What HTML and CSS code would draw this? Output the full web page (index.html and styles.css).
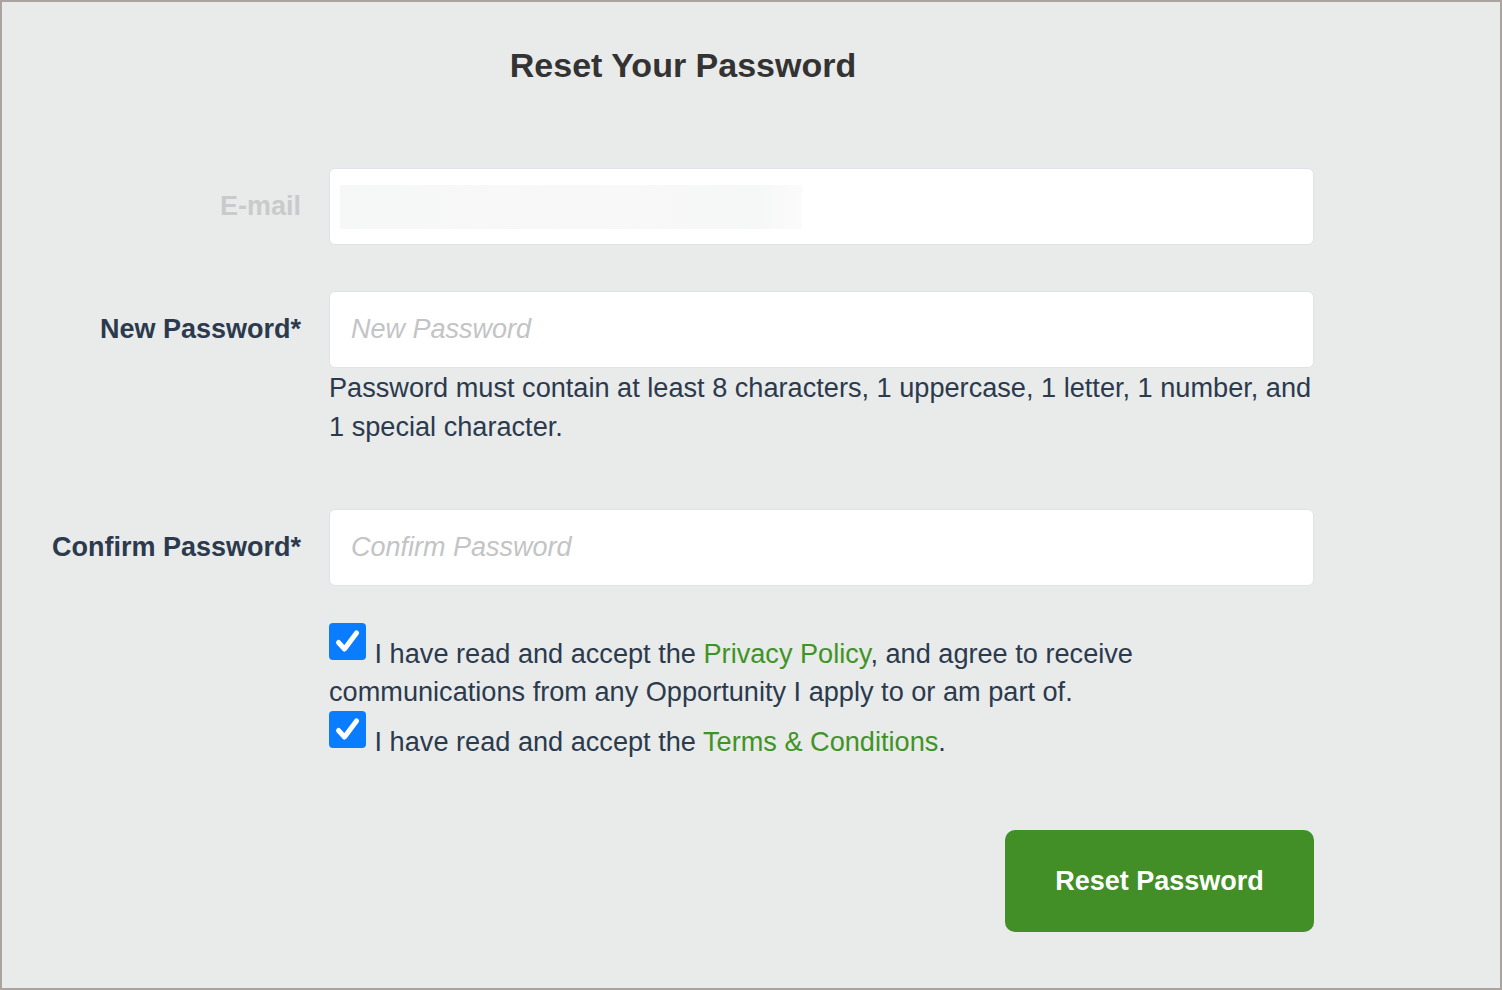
FILE: index.html
```html
<!DOCTYPE html>
<html lang="en">
<head>
    <meta charset="UTF-8">
    <meta name="viewport" content="width=device-width, initial-scale=1.0">
    <title>Reset Your Password</title>
    <link rel="stylesheet" href="styles.css">
</head>
<body>

<div class="page-frame">
    <div class="reset-form">
        <h1 class="reset-title">Reset Your Password</h1>

        <div class="form-row">
            <label class="form-label disabled">E-mail</label>
            <div class="form-field">
                <div class="form-input">
                    <span class="email-redacted"></span>
                </div>
            </div>
        </div>

        <div class="form-row">
            <label class="form-label">New Password*</label>
            <div class="form-field">
                <div class="form-input">
                    <span class="placeholder">New Password</span>
                </div>
                <p class="help-text">Password must contain at least 8 characters, 1 uppercase, 1 letter, 1 number, and 1 special character.</p>
            </div>
        </div>

        <div class="form-row confirm-row">
            <label class="form-label">Confirm Password*</label>
            <div class="form-field">
                <div class="form-input">
                    <span class="placeholder">Confirm Password</span>
                </div>
            </div>
        </div>

        <div class="agreements">
            <p class="agree-line">
                <span class="check-box"><svg viewBox="0 0 37 37" width="37" height="37"><path d="M9.5 19.5 L15.5 26 L27.5 10" fill="none" stroke="#fff" stroke-width="5" stroke-linecap="round" stroke-linejoin="round"/></svg></span>
                I have read and accept the <a href="#">Privacy Policy</a>, and agree to receive communications from any Opportunity I apply to or am part of.
            </p>
            <p class="agree-line">
                <span class="check-box"><svg viewBox="0 0 37 37" width="37" height="37"><path d="M9.5 19.5 L15.5 26 L27.5 10" fill="none" stroke="#fff" stroke-width="5" stroke-linecap="round" stroke-linejoin="round"/></svg></span>
                I have read and accept the <a href="#">Terms &amp; Conditions</a>.
            </p>
        </div>

        <div class="form-actions">
            <button class="submit-btn">Reset Password</button>
        </div>
    </div>
</div>

</body>
</html>
```

FILE: styles.css
```css
html, body {
    margin: 0;
    padding: 0;
}
body {
    font-family: "Liberation Sans", Arial, Helvetica, sans-serif;
    color: #2b3a4d;
}
.page-frame {
    box-sizing: border-box;
    width: 1502px;
    height: 990px;
    border: 2px solid #aaa3a0;
    background: #e9eaea;
}
.reset-form {
    width: 1262px;
    margin-left: 50px;
}
.reset-title {
    margin: 0;
    padding-top: 43px;
    font-size: 34px;
    line-height: 40px;
    font-weight: bold;
    color: #333;
    text-align: center;
}
.form-row {
    display: grid;
    grid-template-columns: 249px 985px;
    column-gap: 28px;
    margin-top: 83px;
}
.form-row + .form-row {
    margin-top: 46px;
}
.form-row.confirm-row {
    margin-top: 63px;
}
.form-label {
    height: 77px;
    display: flex;
    align-items: center;
    justify-content: flex-end;
    white-space: nowrap;
    font-size: 27px;
    font-weight: bold;
    color: #2b3a4d;
}
.form-label.disabled {
    color: #c9cacb;
}
.form-input {
    box-sizing: border-box;
    height: 77px;
    background: #fff;
    border: 1px solid #dde3ea;
    border-radius: 6px;
    display: flex;
    align-items: center;
    padding: 0 21px;
}
.placeholder {
    font-size: 27px;
    font-style: italic;
    color: #c3c4c5;
}
.email-redacted {
    display: block;
    width: 462px;
    height: 44px;
    margin-left: -11px;
    background: linear-gradient(90deg, #f6f7f7, #f8f8f8 50%, #f6f7f7 90%, #fbfbfb);
}
.help-text {
    margin: 0;
    font-size: 27.15px;
    line-height: 39px;
    color: #2b3a4d;
}
.agreements {
    margin-left: 277px;
    margin-top: 37px;
    width: 985px;
}
.agree-line {
    margin: 0;
    font-size: 27.15px;
    line-height: 38px;
    color: #2b3a4d;
}
.agree-line a {
    color: #3f9426;
    text-decoration: none;
}
.check-box {
    display: inline-block;
    width: 37px;
    height: 37px;
    margin-right: 1px;
    background: #0a7cff;
    border-radius: 4px;
    vertical-align: 3px;
}
.check-box svg {
    display: block;
}
.form-actions {
    display: flex;
    justify-content: flex-end;
    margin-top: 69px;
}
.submit-btn {
    width: 309px;
    height: 102px;
    border: none;
    border-radius: 10px;
    background: #418f26;
    color: #fff;
    font-family: "Liberation Sans", Arial, sans-serif;
    font-size: 27px;
    font-weight: bold;
    cursor: pointer;
}
```
